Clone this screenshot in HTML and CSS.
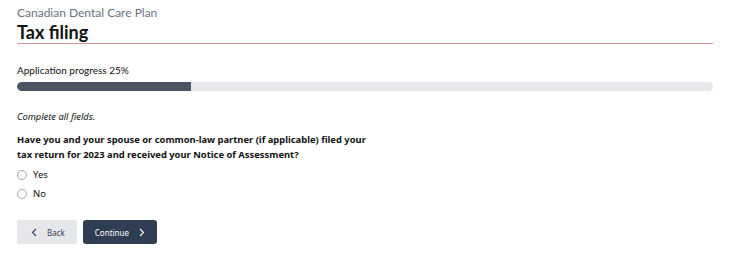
FILE: index.html
```html
<!DOCTYPE html>
<html lang="en">
<head>
  <meta charset="UTF-8">
  <meta name="viewport" content="width=device-width, initial-scale=1.0">
  <title>Tax filing</title>
  <link rel="stylesheet" href="styles.css">
</head>
<body>
  <div class="page">
    <header class="page-header">
      <p class="app-name">Canadian Dental Care Plan</p>
      <h1 class="page-title">Tax filing</h1>
    </header>

    <div class="progress">
      <p class="progress-label">Application progress 25%</p>
      <div class="progress-track">
        <div class="progress-fill" style="width: 25%"></div>
      </div>
    </div>

    <form class="tax-form">
      <p class="form-note">Complete all fields.</p>
      <fieldset class="question">
        <legend class="question-text">Have you and your spouse or common-law partner (if applicable) filed your tax return for 2023 and received your Notice of Assessment?</legend>
        <label class="radio-option"><input type="radio" name="taxFiling" value="yes"><span>Yes</span></label>
        <label class="radio-option"><input type="radio" name="taxFiling" value="no"><span>No</span></label>
      </fieldset>

      <div class="form-buttons">
        <button type="button" class="btn btn-back">
          <svg width="9" height="9" viewBox="0 0 9 9"><path d="M6 1 L2.5 4.5 L6 8" fill="none" stroke="currentColor" stroke-width="1.1"/></svg>
          Back
        </button>
        <button type="submit" class="btn btn-continue">
          Continue
          <svg width="9" height="9" viewBox="0 0 9 9"><path d="M3 1 L6.5 4.5 L3 8" fill="none" stroke="currentColor" stroke-width="1.1"/></svg>
        </button>
      </div>
    </form>
  </div>
</body>
</html>
```

FILE: styles.css
```css
* {
  margin: 0;
  padding: 0;
  box-sizing: border-box;
}
body {
  font-family: "Noto Sans", sans-serif;
  color: #1f2937;
  background: #fff;
}
.page {
  padding: 5px 37px 0 17px;
}
.page-header {
  border-bottom: 1px solid #dc9396;
}
.app-name {
  font-family: Lato, sans-serif;
  font-size: 12px;
  line-height: 16px;
  color: #6b7280;
}
.page-title {
  font-family: Lato, sans-serif;
  font-size: 18px;
  line-height: 22px;
  font-weight: 700;
  color: #111;
}
.progress {
  margin-top: 19px;
}
.progress-label {
  font-family: Lato, sans-serif;
  font-size: 10px;
  line-height: 14px;
  margin-bottom: 5px;
  color: #111;
}
.progress-track {
  height: 9px;
  background: #e5e7eb;
  border-radius: 5px;
  overflow: hidden;
}
.progress-fill {
  height: 100%;
  background: #4b5563;
  border-radius: 5px 0 0 5px;
}
.tax-form {
  margin-top: 19px;
}
.form-note {
  font-size: 9.3px;
  font-style: italic;
  line-height: 14px;
  color: #111;
}
.question {
  border: none;
  margin-top: 8px;
}
.question-text {
  font-size: 9.4px;
  font-weight: 700;
  line-height: 15px;
  color: #111;
  max-width: 360px;
  margin-bottom: 3px;
}
.radio-option {
  display: flex;
  align-items: center;
  gap: 6px;
  height: 19px;
  font-size: 9.5px;
  color: #111;
}
.radio-option input {
  appearance: none;
  width: 10px;
  height: 10px;
  border: 1px solid #a3a8b0;
  border-radius: 50%;
  background: #fff;
}
.form-buttons {
  display: flex;
  gap: 6px;
  margin-top: 17px;
}
.btn {
  display: flex;
  align-items: center;
  gap: 8px;
  height: 24px;
  border: none;
  border-radius: 3px;
  font-family: "Noto Sans", sans-serif;
  font-size: 8px;
  cursor: pointer;
}
.btn-back {
  background: #e5e7eb;
  color: #374151;
  padding: 0 12px 0 13px;
}
.btn-continue {
  background: #2f3e52;
  color: #fff;
  padding: 0 11px 0 12px;
}
```
